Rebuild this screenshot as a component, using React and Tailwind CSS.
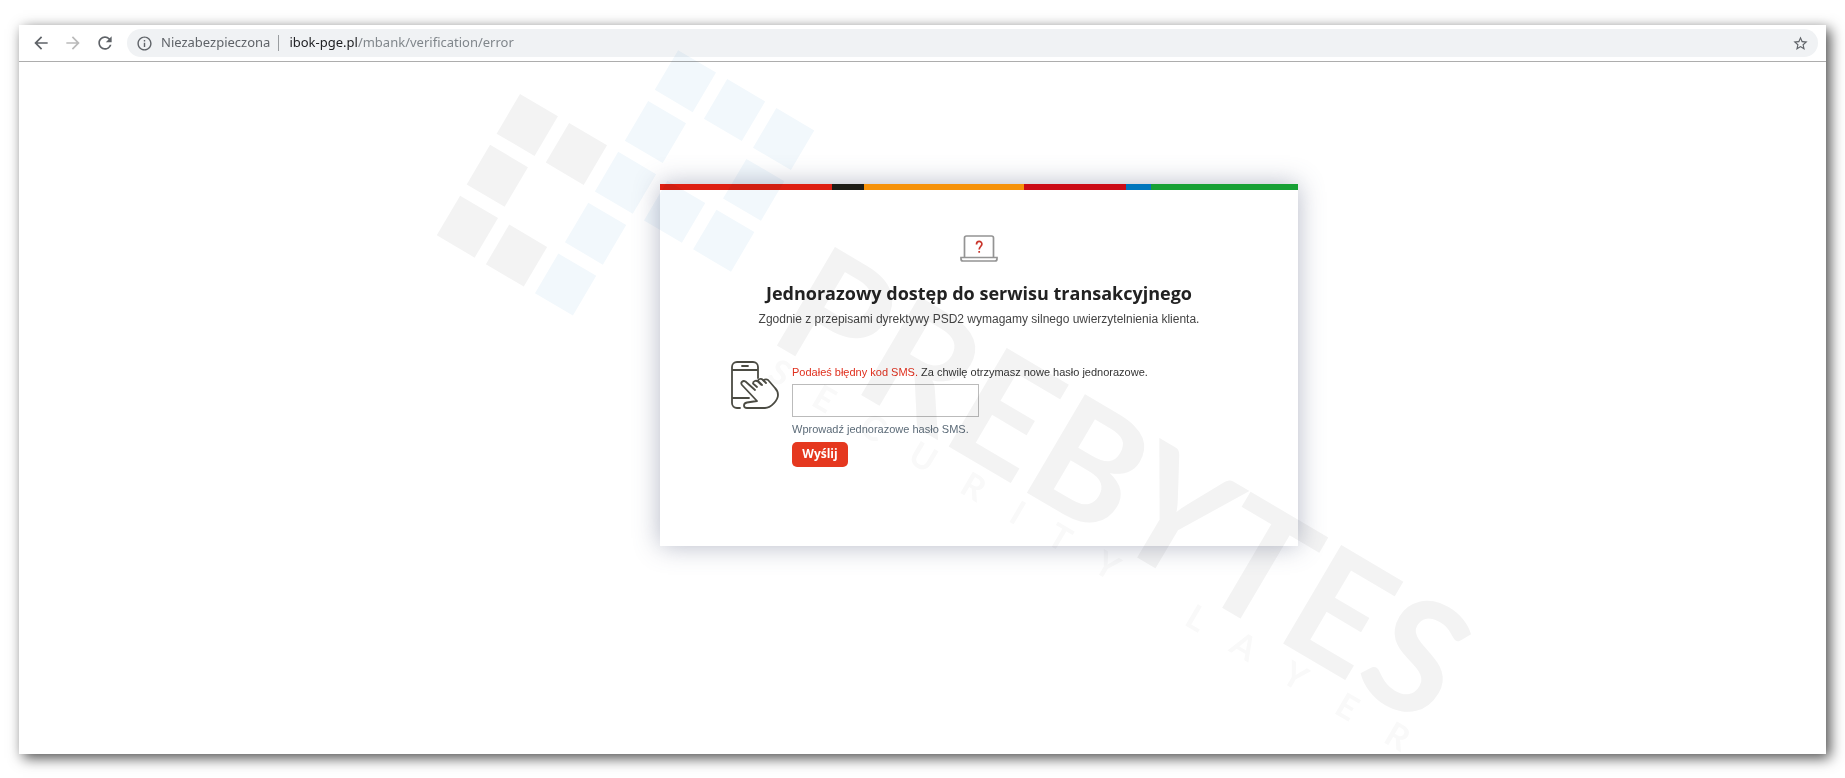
import { MdArrowBack, MdArrowForward, MdRefresh, MdInfoOutline, MdStarBorder } from "react-icons/md";

const stripes = [
  { color: "bg-[#de1f12]", grow: 172 },
  { color: "bg-[#1d1d17]", grow: 32 },
  { color: "bg-[#f6920a]", grow: 160 },
  { color: "bg-[#cb0b16]", grow: 102 },
  { color: "bg-[#0076bd]", grow: 25 },
  { color: "bg-[#17a035]", grow: 147 },
];

const greyTiles = [[0, 0], [1, 0], [0, 1], [0, 2], [1, 2]];
const blueTiles = [[2, -2], [3, -2], [4, -2], [2, -1], [4, -1], [2, 0], [3, 0], [4, 0], [2, 1], [2, 2]];

function Watermark() {
  return (
    <svg
      className="pointer-events-none absolute left-0 top-0 mix-blend-multiply"
      width="1560"
      height="778"
      aria-hidden="true"
    >
      <g transform="translate(520 94) rotate(30.500)">
        {greyTiles.map(([x, y]) => (
          <rect key={`${x}${y}`} x={x * 57} y={y * 59} width="44" height="46" fill="#f3f3f3" />
        ))}
        {blueTiles.map(([x, y]) => (
          <rect key={`${x}${y}`} x={x * 57} y={y * 59} width="44" height="46" fill="#f2f8fc" />
        ))}
      </g>
      <g transform="translate(778 346) rotate(30.500)" fontFamily="Lato, sans-serif" fontWeight="700">
        <text x="-14" y="0" fontSize="158" fill="#f3f3f3">
          PREBYTES
        </text>
        <text
          x="6 57 112 169 229 286 330 384 430 490 542 602 664 721"
          y="34"
          fontSize="34"
          fill="#f9f9f9"
        >
          SECURITY LAYER
        </text>
      </g>
    </svg>
  );
}

function LaptopIcon() {
  return (
    <svg className="h-7 w-[38px]" viewBox="0 0 38 28" fill="none" stroke="#949494" strokeWidth="1.700">
      <path d="M4.500 23V4a2 2 0 0 1 2-2h25a2 2 0 0 1 2 2v19" />
      <path d="M1 23.500h36v1.500a2 2 0 0 1-2 2H3a2 2 0 0 1-2-2z" />
      <path stroke="#c9342a" d="M16.500 10.500c0-4 5.400-4 5.400-.4 0 2.400-2.700 2.500-2.700 5.400M19.200 17v1.800" />
    </svg>
  );
}

function PhoneIcon() {
  return (
    <svg
      className="size-12 shrink-0"
      viewBox="0 0 48 48"
      fill="none"
      stroke="#4b4b43"
      strokeWidth="1.800"
      strokeLinecap="round"
      strokeLinejoin="round"
    >
      <path d="M27 17V6a5 5 0 0 0-5-5H6a5 5 0 0 0-5 5v36a5 5 0 0 0 5 5h3M1 9h26M11 5h6M1 37h17" />
      <path d="M24 29 14.500 20.500c-2.500-1.500-5.500 1-3.500 3.500L26 40l-10 1.500c-4 .8-4 5.500 0 5.500h18c6 0 13-8 13-13 0-3-1-5-3-7l-6-7c-1.500-2-4-2-5.500-.5" />
      <path d="M26 26l-4-3.500c0-2.500 3-3.500 5-2l3 3M31 24l-4-4c0-2 3-3 5-1l3 3" />
    </svg>
  );
}

function Toolbar() {
  return (
    <div className="box-content flex h-9 items-center border-b border-[#adadad] pr-2 pl-3 text-[#5f6368]">
      <button type="button" aria-label="Wstecz" className="mr-3">
        <MdArrowBack size={20} />
      </button>
      <button type="button" aria-label="Dalej" className="mr-3 text-[#bababa]">
        <MdArrowForward size={20} />
      </button>
      <button type="button" aria-label="Odśwież" className="mr-3">
        <MdRefresh size={20} />
      </button>
      <div className="flex h-7 flex-1 items-center rounded-full bg-[#f0f2f4] pr-[9px] pl-[9px] font-['Noto_Sans',sans-serif] text-[13px]">
        <MdInfoOutline size={17} />
        <span className="ml-2">Niezabezpieczona</span>
        <span className="ml-2 mr-[10px] h-4 w-px bg-[#9a9da0]" />
        <span className="text-[#80868b]">
          <span className="text-[#202124]">ibok-pge.pl</span>/mbank/verification/error
        </span>
        <button type="button" aria-label="Dodaj do zakładek" className="ml-auto">
          <MdStarBorder size={17} />
        </button>
      </div>
    </div>
  );
}

function AccessCard() {
  return (
    <div className="w-[638px] bg-white pb-[79px] shadow-[0_0_24px_rgba(90,100,130,0.45)]">
      <div className="flex h-[6px]">
        {stripes.map((s) => (
          <div key={s.color} className={s.color} style={{ flexGrow: s.grow }} />
        ))}
      </div>
      <div className="flex flex-col items-center pt-11">
        <LaptopIcon />
        <h1 className="mt-[19px] font-['Open_Sans',sans-serif] text-[18px] leading-6 font-bold text-[#222]">
          Jednorazowy dostęp do serwisu transakcyjnego
        </h1>
        <p className="mt-1 text-[12px] leading-5 text-[#444]">
          Zgodnie z przepisami dyrektywy PSD2 wymagamy silnego uwierzytelnienia klienta.
        </p>
      </div>
      <div className="mt-8 flex gap-[13px] pl-[71px]">
        <PhoneIcon />
        <div className="flex flex-col items-start pt-[3px] text-[11px] leading-4">
          <label htmlFor="code" className="text-[#333]">
            <span className="text-[#e0301e]">Podałeś błędny kod SMS.</span> Za chwilę otrzymasz nowe hasło
            jednorazowe.
          </label>
          <input id="code" type="text" className="mt-1 h-[33px] w-[187px] border border-[#bbb] px-2" />
          <p className="mt-1 text-[#5c6b78]">Wprowadź jednorazowe hasło SMS.</p>
          <button
            type="button"
            className="mt-[5px] h-[25px] w-14 rounded-[5px] bg-[#e5381f] pb-px font-['Open_Sans',sans-serif] text-[12px] font-bold text-white"
          >
            Wyślij
          </button>
        </div>
      </div>
    </div>
  );
}

export default function App() {
  return (
    <div className="relative flex min-h-screen flex-col overflow-hidden bg-white pt-[25px] pr-[19px] pb-6 pl-[19px] font-['Liberation_Sans',Arial,sans-serif]">
      <div className="flex flex-1 flex-col bg-white shadow-[4px_4px_13px_rgba(0,0,0,0.7)]">
        <Toolbar />
        <main className="flex flex-1 items-start justify-center pt-[122px] pl-[113px]">
          <AccessCard />
        </main>
      </div>
      <Watermark />
    </div>
  );
}
